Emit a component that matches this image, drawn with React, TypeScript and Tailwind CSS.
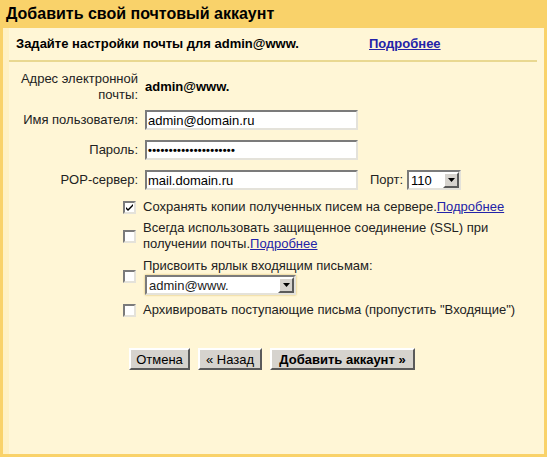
import type { ReactNode } from 'react'

const inset = 'border-2 border-t-[#7b7b7b] border-l-[#7b7b7b] border-b-[#e4e2da] border-r-[#e4e2da] bg-white'
const outset = 'border-2 border-t-white border-l-white border-b-[#5a5a5a] border-r-[#5a5a5a] bg-[#d6d3ce]'

function TextInput({ value, password }: { value: string; password?: boolean }) {
  return (
    <div className={`${inset} w-[213px] h-[20px] flex items-center pl-[1px] text-[13px] leading-none text-black`}>
      {password ? <span className="tracking-[0.3px] text-[11px] font-bold">•••••••••••••••••••••</span> : value}
    </div>
  )
}

function Select({ value, width }: { value: string; width: string }) {
  return (
    <div className={`${inset} ${width} h-[20px] flex items-stretch`}>
      <div className="flex-1 flex items-center pl-[2px] text-[13px] leading-none">{value}</div>
      <div className={`${outset} w-[16px] flex items-center justify-center`}>
        <svg width="7" height="4" viewBox="0 0 7 4">
          <path d="M0 0h7L3.5 4z" fill="#000" />
        </svg>
      </div>
    </div>
  )
}

function Checkbox({ checked }: { checked?: boolean }) {
  return (
    <div className={`${inset} w-[13px] h-[13px] flex items-center justify-center`}>
      {checked && (
        <svg width="7" height="7" viewBox="0 0 7 7">
          <path d="M0 3l2 2 5-5v2L2 7 0 5z" fill="#000" />
        </svg>
      )}
    </div>
  )
}

function Row({ label, children }: { label: ReactNode; children: ReactNode }) {
  return (
    <div className="flex items-center gap-[7px]">
      <div className="w-[135px] text-right text-[13px] leading-[16px] text-[#222]">{label}</div>
      {children}
    </div>
  )
}

function Link({ children }: { children: ReactNode }) {
  return <span className="text-[#2323a8] underline">{children}</span>
}

function Button({ children, bold, width }: { children: ReactNode; bold?: boolean; width: string }) {
  return (
    <div className={`${outset} ${width} h-[22px] flex items-center justify-center text-[13px] leading-none ${bold ? 'font-bold' : ''}`}>
      {children}
    </div>
  )
}

export default function App() {
  return (
    <div className="w-[547px] h-[457px] bg-[#f9d26a] flex flex-col font-['Liberation_Sans',Arial,sans-serif] text-black">
      <div className="h-[28px] pl-[6px] flex items-center text-[16px] font-bold">Добавить свой почтовый аккаунт</div>

      <div className="flex-1 ml-[3px] mr-[3px] mb-[3px] bg-[#fff6d6] border-l-[6px] border-[#fff1c4] flex flex-col">
        {/* Subheader */}
        <div className="mr-[7px] h-[34px] border-b-2 border-[#e9d891] flex items-center text-[13px] font-bold">
          <span className="pl-[7px] w-[360px]">Задайте настройки почты для admin@www.</span>
          <Link>Подробнее</Link>
        </div>

        <div className="ml-[-6px] flex flex-col">
          {/* Email */}
          <div className="mt-[9px]">
            <Row
              label={
                <>
                  Адрес электронной
                  <br />
                  почты:
                </>
              }
            >
              <span className="text-[13px] font-bold">admin@www.</span>
            </Row>
          </div>

          <div className="mt-[7px] flex flex-col gap-[10px]">
            <Row label="Имя пользователя:">
              <TextInput value="admin@domain.ru" />
            </Row>
            <Row label="Пароль:">
              <TextInput value="" password />
            </Row>
            <Row label="POP-сервер:">
              <TextInput value="mail.domain.ru" />
              <div className="ml-[5px] flex items-center gap-[4px]">
                <span className="text-[13px] text-[#222]">Порт:</span>
                <Select value="110" width="w-[54px]" />
              </div>
            </Row>
          </div>

          {/* Options */}
          <div className="mt-[9px] pl-[120px] flex flex-col text-[13px] leading-[16px] text-[#222]">
            <div className="flex items-center gap-[7px]">
              <Checkbox checked />
              <span>
                Сохранять копии полученных писем на сервере.<Link>Подробнее</Link>
              </span>
            </div>
            <div className="mt-[5px] flex items-center gap-[7px]">
              <Checkbox />
              <span>
                Всегда использовать защищенное соединение (SSL) при
                <br />
                получении почты.<Link>Подробнее</Link>
              </span>
            </div>
            <div className="mt-[6px] flex items-center gap-[7px]">
              <Checkbox />
              <div className="flex flex-col items-start">
                <span>Присвоить ярлык входящим письмам:</span>
                <div className="ml-[2px] mt-[1px] shadow-[0_0_2px_#d9b95a]">
                  <Select value="admin@www." width="w-[151px]" />
                </div>
              </div>
            </div>
            <div className="mt-[7px] flex items-center gap-[7px]">
              <Checkbox />
              <span>Архивировать поступающие письма (пропустить "Входящие")</span>
            </div>
          </div>

          {/* Buttons */}
          <div className="mt-[30px] pl-[126px] flex gap-[8px]">
            <Button width="w-[61px]">Отмена</Button>
            <Button width="w-[64px]">« Назад</Button>
            <Button bold width="w-[145px]">Добавить аккаунт »</Button>
          </div>
        </div>
      </div>
    </div>
  )
}
